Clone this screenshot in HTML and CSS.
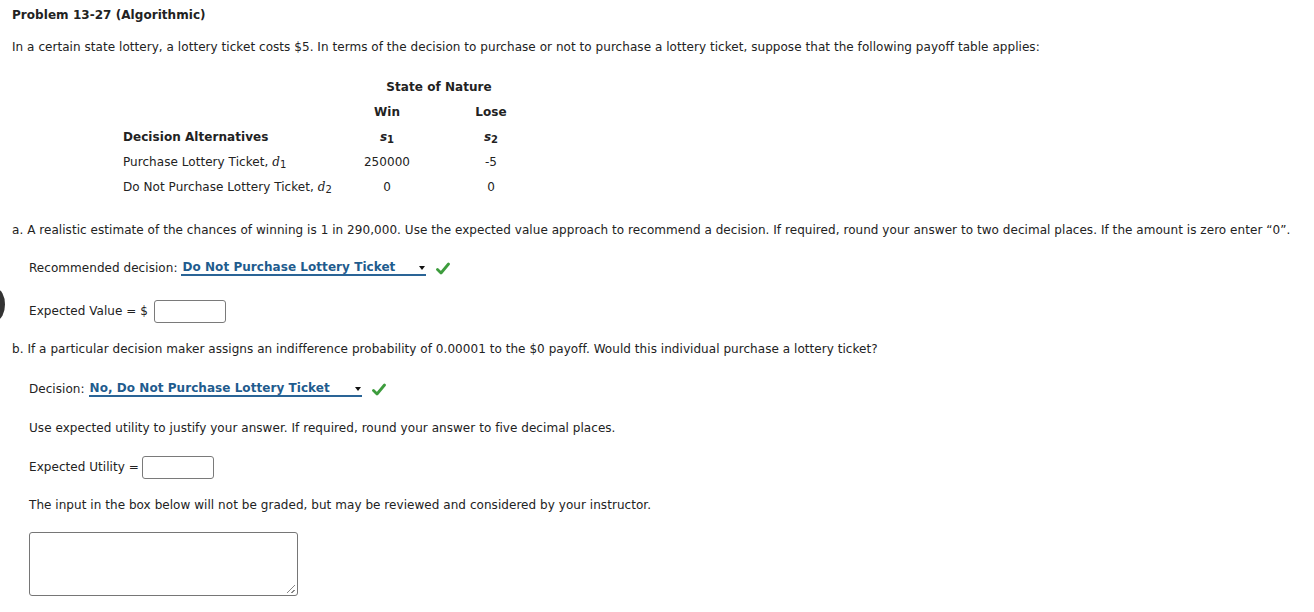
FILE: index.html
```html
<!DOCTYPE html>
<html>
<head>
<meta charset="utf-8">
<link rel="stylesheet" href="styles.css">
</head>
<body>
<div class="page">
  <div class="edge-dot"></div>
  <h1 class="title">Problem 13-27 (Algorithmic)</h1>
  <p class="intro">In a certain state lottery, a lottery ticket costs $5. In terms of the decision to purchase or not to purchase a lottery ticket, suppose that the following payoff table applies:</p>

  <table class="payoff">
    <tr><td class="lbl"></td><th colspan="2" class="hd">State of Nature</th></tr>
    <tr><td class="lbl"></td><th class="c">Win</th><th class="c">Lose</th></tr>
    <tr><th class="lbl b">Decision Alternatives</th><th class="c"><span class="sv">s</span><sub>1</sub></th><th class="c"><span class="sv">s</span><sub>2</sub></th></tr>
    <tr><td class="lbl">Purchase Lottery Ticket, <i class="dv">d</i><sub>1</sub></td><td class="c">250000</td><td class="c">-5</td></tr>
    <tr><td class="lbl">Do Not Purchase Lottery Ticket, <i class="dv">d</i><sub>2</sub></td><td class="c">0</td><td class="c">0</td></tr>
  </table>

  <p class="q qa">a. A realistic estimate of the chances of winning is 1 in 290,000. Use the expected value approach to recommend a decision. If required, round your answer to two decimal places. If the amount is zero enter “0”.</p>

  <div class="line rec">
    <span>Recommended decision:</span>
    <span class="sel sel-a">Do Not Purchase Lottery Ticket<span class="arrow"></span></span>
    <svg class="check" width="14" height="14" viewBox="0 0 14 14"><path d="M1.5 7.5 L5 11 L12.5 2" fill="none" stroke="#3d9c3d" stroke-width="2.8" stroke-linecap="round" stroke-linejoin="round"/></svg>
  </div>

  <div class="line ev">
    <span>Expected Value = $</span>
    <span class="box"></span>
  </div>

  <p class="q qb">b. If a particular decision maker assigns an indifference probability of 0.00001 to the $0 payoff. Would this individual purchase a lottery ticket?</p>

  <div class="line dec">
    <span>Decision:</span>
    <span class="sel sel-b">No, Do Not Purchase Lottery Ticket<span class="arrow"></span></span>
    <svg class="check" width="14" height="14" viewBox="0 0 14 14"><path d="M1.5 7.5 L5 11 L12.5 2" fill="none" stroke="#3d9c3d" stroke-width="2.8" stroke-linecap="round" stroke-linejoin="round"/></svg>
  </div>

  <p class="sub use">Use expected utility to justify your answer. If required, round your answer to five decimal places.</p>

  <div class="line eu">
    <span>Expected Utility =</span>
    <span class="box"></span>
  </div>

  <p class="sub note">The input in the box below will not be graded, but may be reviewed and considered by your instructor.</p>

  <div class="ta"><span class="grip"></span></div>
</div>
</body>
</html>
```

FILE: styles.css
```css
html, body {
  margin: 0;
  padding: 0;
  background: #fff;
}
body {
  font-family: "DejaVu Sans", Verdana, sans-serif;
  font-size: 12px;
  letter-spacing: 0.05px;
  color: #222;
}
.page {
  position: relative;
  padding: 7px 12px 0 12px;
}
.edge-dot {
  position: absolute;
  left: -12px;
  top: 289px;
  width: 17px;
  height: 31px;
  border-radius: 50%;
  background: #333;
}
.title {
  margin: 0;
  font-size: 12px;
  font-weight: bold;
  line-height: 16px;
}
.intro {
  margin: 16px 0 0 0;
  line-height: 16px;
}
.payoff {
  border-collapse: collapse;
  margin: 19px 0 0 111px;
}
.payoff td, .payoff th {
  padding: 0;
  height: 25px;
  line-height: 16px;
  vertical-align: middle;
  font-size: 12px;
}
.payoff th { font-weight: bold; }
.payoff .lbl {
  width: 212px;
  text-align: left;
  font-weight: normal;
}
.payoff .lbl.b { font-weight: bold; }
.payoff .c {
  width: 104px;
  text-align: center;
}
.payoff .hd { text-align: center; }
.sv {
  font-family: "DejaVu Sans", sans-serif;
  font-style: italic;
  font-weight: bold;
}
.dv {
  font-family: "DejaVu Serif", serif;
  font-style: italic;
}
sub {
  font-size: 10px;
  vertical-align: -2px;
  line-height: 0;
}
.q {
  margin: 0;
  line-height: 16px;
}
.qa { margin-top: 23px; }
.line {
  display: flex;
  align-items: center;
  gap: 6px;
  margin-left: 17px;
  height: 24px;
}
.rec { margin-top: 18px; }
.ev { margin-top: 19px; }
.sel {
  position: relative;
  display: inline-block;
  color: #1f5c8e;
  font-weight: bold;
  border-bottom: 2px solid #2a6496;
  line-height: 14px;
  padding: 0 14px 0 1px;
  margin-left: -2px;
}
.sel-a { width: 230px; }
.sel-b { width: 258px; }
.arrow {
  position: absolute;
  right: 1px;
  top: 6px;
  width: 0;
  height: 0;
  border-left: 3px solid transparent;
  border-right: 3px solid transparent;
  border-top: 4px solid #111;
}
.check {
  margin-left: 4px;
  margin-top: 1px;
}
.box {
  display: inline-block;
  border: 1px solid #7a7a7a;
  border-radius: 3px;
  background: #fff;
  box-sizing: border-box;
  width: 72px;
  height: 23px;
}
.qb { margin-top: 18px; }
.dec { margin-top: 20px; }
.sub {
  margin: 0 0 0 17px;
  line-height: 16px;
}
.use { margin-top: 19px; }
.eu { margin-top: 19px; gap: 3px; }
.note { margin-top: 18px; }
.ta {
  position: relative;
  margin: 19px 0 0 17px;
  width: 269px;
  height: 64px;
  border: 1px solid #767676;
  border-radius: 3px;
  box-sizing: border-box;
}
.grip {
  position: absolute;
  right: 2px;
  bottom: 2px;
  width: 8px;
  height: 8px;
  background: linear-gradient(135deg, transparent 45%, #888 45%, #888 55%, transparent 55%, transparent 75%, #888 75%, #888 85%, transparent 85%);
}
```
